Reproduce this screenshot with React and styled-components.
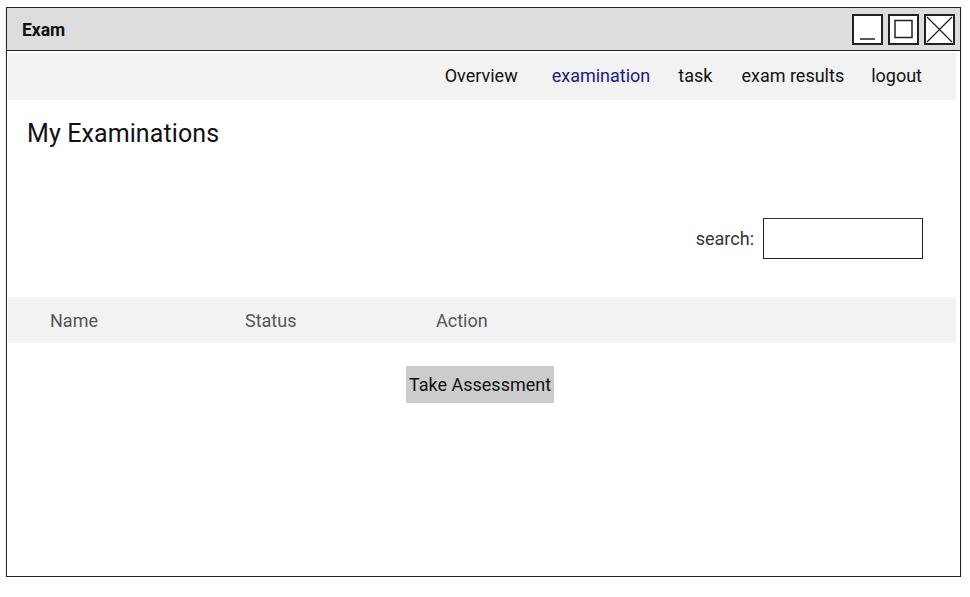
import React from "react";
import styled, { createGlobalStyle } from "styled-components";

const GlobalStyle = createGlobalStyle`
  body {
    margin: 0;
    background: #ffffff;
    font-family: Roboto, "Liberation Sans", sans-serif;
  }
`;

const Window = styled.div`
  margin: 7px 0 0 6px;
  width: 953px;
  height: 568px;
  border: 1px solid #222;
  box-shadow: 0 1px 1px rgba(0, 0, 0, 0.35);
  display: flex;
  flex-direction: column;
  background: #fff;
`;

const TitleBar = styled.div`
  height: 42px;
  background: #dddddd;
  border-bottom: 1px solid #222;
  display: flex;
  align-items: center;
  justify-content: space-between;
  padding: 0 5px 0 15px;
  box-sizing: content-box;
`;

const Title = styled.span`
  font-size: 17.5px;
  font-weight: 700;
  color: #111;
  margin-top: 1px;
`;

const Controls = styled.div`
  display: flex;
  gap: 5px;
`;

const ControlBox = styled.div`
  width: 27px;
  height: 27px;
  border: 2px solid #222;
  background: #fff;
  display: flex;
  align-items: center;
  justify-content: center;
`;

const Body = styled.div`
  flex: 1;
  padding: 2px 4px 0 1px;
  display: flex;
  flex-direction: column;
`;

const NavBar = styled.nav`
  height: 47px;
  background: #f2f2f2;
  display: flex;
  align-items: center;
  justify-content: flex-end;
  padding-right: 34px;
`;

const NavItem = styled.span`
  font-size: 18px;
  color: ${(p) => (p.$active ? "#1c1c7a" : "#111")};
  margin-left: ${(p) => p.$gap}px;
  margin-top: -2px;
`;

const Heading = styled.h1`
  margin: 20px 0 0 19px;
  font-size: 25px;
  font-weight: 400;
  color: #111;
  line-height: 28px;
  letter-spacing: 0.1px;
`;

const SearchRow = styled.div`
  display: flex;
  justify-content: flex-end;
  align-items: center;
  gap: 9px;
  margin-top: 70px;
  padding-right: 33px;
`;

const SearchLabel = styled.label`
  font-size: 18px;
  color: #333;
`;

const SearchInput = styled.input`
  width: 160px;
  height: 41px;
  box-sizing: border-box;
  border: 1px solid #222;
  border-top-color: #333;
  margin: 0;
  padding: 0 6px;
  font: inherit;
  outline: none;
`;

const TableHead = styled.div`
  margin-top: 38px;
  height: 46px;
  background: #f2f2f2;
  display: flex;
  align-items: center;
`;

const HeadCell = styled.span`
  width: ${(p) => p.$w}px;
  font-size: 18px;
  color: #555;
  &:first-child {
    margin-left: 42px;
  }
`;

const RowArea = styled.div`
  padding: 23px 0 0 398px;
`;

const ActionButton = styled.button`
  height: 37px;
  padding: 0 3px;
  border: none;
  background: #cccccc;
  color: #111;
  font-family: Roboto, "Liberation Sans", sans-serif;
  font-size: 18px;
  cursor: pointer;
`;

const navItems = [
  { label: "Overview", gap: 0 },
  { label: "examination", gap: 34, active: true },
  { label: "task", gap: 28 },
  { label: "exam results", gap: 29 },
  { label: "logout", gap: 27 },
];

export default function App() {
  return (
    <>
      <GlobalStyle />
      <Window>
        <TitleBar>
          <Title>Exam</Title>
          <Controls>
            <ControlBox>
              <svg width="27" height="27" viewBox="0 0 27 27">
                <line x1="6" y1="23" x2="21" y2="23" stroke="#222" strokeWidth="1.5" />
              </svg>
            </ControlBox>
            <ControlBox>
              <svg width="27" height="27" viewBox="0 0 27 27">
                <rect x="5" y="4.5" width="17" height="17" fill="none" stroke="#222" strokeWidth="1.5" />
              </svg>
            </ControlBox>
            <ControlBox>
              <svg width="27" height="27" viewBox="0 0 27 27">
                <path d="M1 1 L26 26 M26 1 L1 26" stroke="#222" strokeWidth="1.3" />
              </svg>
            </ControlBox>
          </Controls>
        </TitleBar>
        <Body>
          <NavBar>
            {navItems.map((n) => (
              <NavItem key={n.label} $gap={n.gap} $active={n.active}>
                {n.label}
              </NavItem>
            ))}
          </NavBar>
          <Heading>My Examinations</Heading>
          <SearchRow>
            <SearchLabel htmlFor="search">search:</SearchLabel>
            <SearchInput id="search" type="text" />
          </SearchRow>
          <TableHead>
            <HeadCell $w={195}>Name</HeadCell>
            <HeadCell $w={191}>Status</HeadCell>
            <HeadCell $w={100}>Action</HeadCell>
          </TableHead>
          <RowArea>
            <ActionButton>Take Assessment</ActionButton>
          </RowArea>
        </Body>
      </Window>
    </>
  );
}
